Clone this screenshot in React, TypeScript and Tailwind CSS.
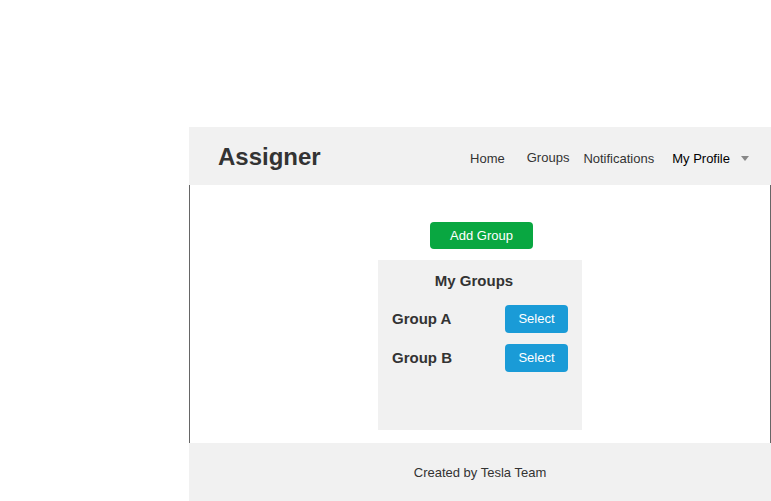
const groups = ["Group A", "Group B"];

function Header() {
  return (
    <header className="h-[58px] bg-[#f1f1f1] flex items-center pl-[29px] pr-[22px]">
      <h1 className="text-[24px] leading-none font-bold text-[#333] mt-[2px]">Assigner</h1>
      <nav className="ml-auto flex items-center text-[13px] text-[#333] mt-[5px]">
        <a className="mr-[22px] -ml-[1px]">Home</a>
        <a className="mr-[14px] -mt-[1px]">Groups</a>
        <a className="mr-[18px]">Notifications</a>
        <button className="flex items-center text-black">
          My Profile
          <span className="ml-[11px] w-0 h-0 border-x-[4.5px] border-x-transparent border-t-[5px] border-t-[#888]" />
        </button>
      </nav>
    </header>
  );
}

function GroupRow({ name }: { name: string }) {
  return (
    <div className="flex items-center justify-between">
      <span className="text-[15px] font-bold text-[#333]">{name}</span>
      <button className="w-[63px] h-[28px] rounded-[4px] bg-[#1a9bd7] text-white text-[13px]">
        Select
      </button>
    </div>
  );
}

export default function App() {
  return (
    <div
      className="min-h-[501px] bg-white pl-[189px] pt-[127px]"
      style={{ fontFamily: '"Liberation Sans", Arial, sans-serif' }}
    >
      <div className="w-[582px]">
        <Header />
        <main className="h-[258px] border-l border-r border-[#666] flex flex-col items-center pt-[37px]">
          <button className="w-[103px] h-[27px] rounded-[4px] bg-[#09a741] text-white text-[13px] ml-[3px]">
            Add Group
          </button>
          <section className="mt-[11px] w-[204px] h-[170px] bg-[#f1f1f1] px-[14px] pt-[11px]">
            <h2 className="text-center text-[15px] font-bold text-[#333] leading-5 pr-[12px]">My Groups</h2>
            <div className="mt-[14px] flex flex-col gap-[11px]">
              {groups.map((g) => (
                <GroupRow key={g} name={g} />
              ))}
            </div>
          </section>
        </main>
        <footer className="h-[58px] bg-[#f1f1f1] flex items-center justify-center text-[13px] text-[#333] pt-[2px]">
          Created by Tesla Team
        </footer>
      </div>
    </div>
  );
}
